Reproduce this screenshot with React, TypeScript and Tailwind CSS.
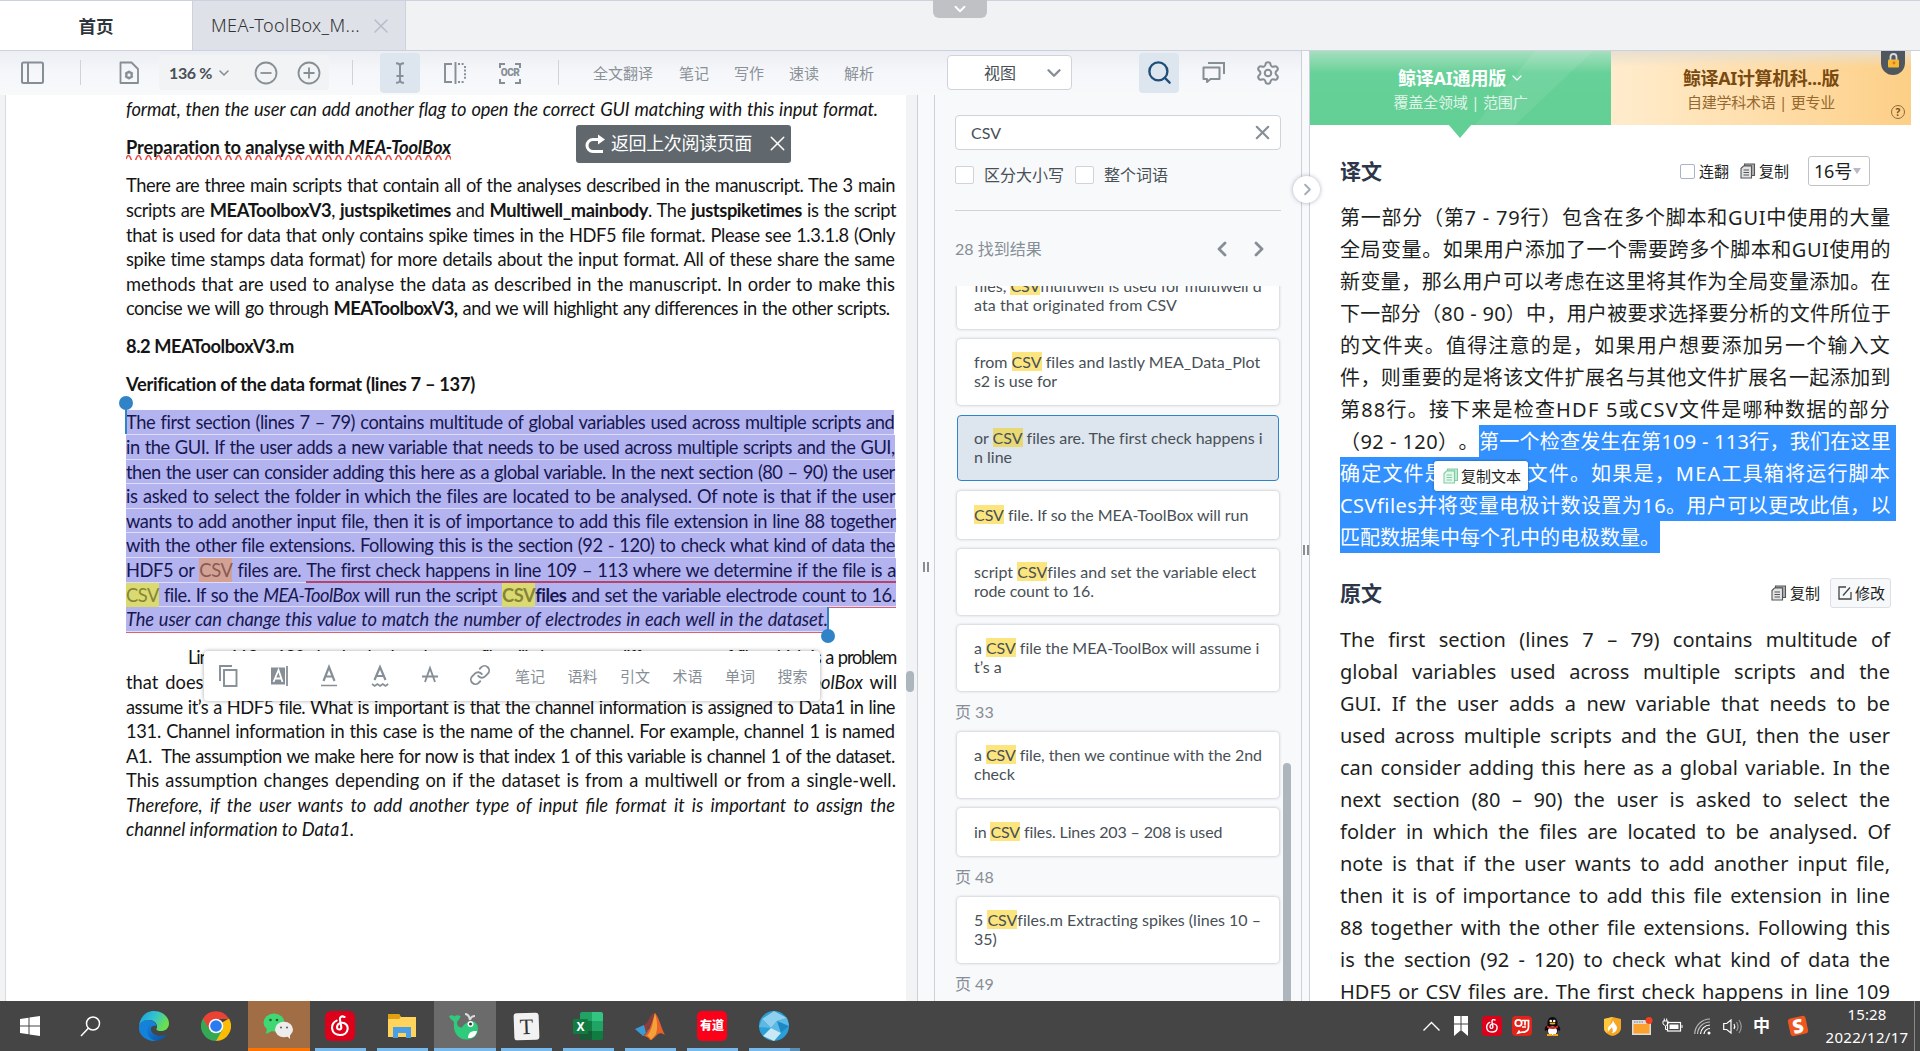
import React, { useLayoutEffect, useRef } from "react";
import { ChevronDown, ChevronLeft, ChevronRight, ChevronUp, X, Settings, Search, Link } from "lucide-react";

const UI = "font-['Noto_Sans','Noto_Sans_CJK_SC',sans-serif]";

type FitProps = { w: number; by?: "word" | "letter"; className?: string; children: React.ReactNode };

/** One line of text whose spacing is adjusted so that it fills exactly `w` pixels. */
function Fit({ w, by = "word", className = "", children }: FitProps) {
  const ref = useRef<HTMLSpanElement>(null);
  useLayoutEffect(() => {
    const el = ref.current;
    if (!el) return;
    el.style.letterSpacing = "";
    el.style.wordSpacing = "";
    const extra = w - el.getBoundingClientRect().width;
    const text = el.textContent || "";
    const count = Math.max(1, text.length);
    const spaces = text.split(/[ \u00a0]/).length - 1;
    if (by === "word" && spaces > 0) {
      const word = Math.max(0.9, extra / spaces);
      el.style.wordSpacing = word + "px";
      el.style.letterSpacing = (extra - word * spaces) / count + "px";
    } else el.style.letterSpacing = extra / count + "px";
  }, [w, by]);
  return (
    <span ref={ref} className={"inline-block whitespace-pre [text-spacing-trim:space-all] " + className}>
      {children}
    </span>
  );
}

function Line({ w = 769, by, sel, red, className = "", children }: { w?: number; by?: "word" | "letter"; sel?: boolean; red?: boolean; className?: string; children: React.ReactNode }) {
  return (
    <div className="h-[24.6px] leading-[24.6px]">
      <div className={"h-full w-fit " + (sel ? "border-b border-[#dedef8] bg-[#b3b3ef] text-[#17174f] " : "") + (red ? "shadow-[0_1px_0_#d9606f] " : "")}>
        <Fit w={w} by={by} className={className}>{children}</Fit>
      </div>
    </div>
  );
}

/* ---------- top ---------- */

function TabBar() {
  return (
    <div className="relative flex h-[51px] shrink-0 border-y border-[#cdd0dd] bg-[#f1f2f4]">
      <div className="flex w-[192px] items-center justify-center bg-white pt-px text-[17.5px] font-bold text-[#2f353c]">首页</div>
      <div className="flex w-[214px] items-center border-x border-[#cdd0dd] bg-[#dfe1e9] pl-[18px] text-[18px] font-light text-[#333]">
        <Fit w={149} by="letter">MEA-ToolBox_M...</Fit>
        <X className="ml-[9px] mt-px size-[24px] text-[#b9bcc8]" strokeWidth={1.5} />
      </div>
      <div className="absolute left-[933px] top-[-1px] flex h-[18px] w-[54px] items-center justify-center rounded-b-md bg-[#bfc1c4]">
        <ChevronDown className="size-[18px] text-white" strokeWidth={2.4} />
      </div>
    </div>
  );
}

function Divider({ className = "" }: { className?: string }) {
  return <div className={"h-[25px] w-px shrink-0 bg-[#ced4da] " + className} />;
}

function Toolbar() {
  return (
    <div className="flex h-[44px] w-full shrink-0 items-center bg-linear-to-b from-[#eceef3] via-[#f6f7fa] to-[#f8f9fb] pb-px text-[#868e96]">
      <svg className="ml-[20px] size-[24px]" viewBox="0 0 24 24" fill="none" stroke="currentColor" strokeWidth="2">
        <rect x="2" y="1.500" width="21" height="20.500" rx="1.5" /><path d="M8 2v20" />
      </svg>
      <Divider className="ml-[36px]" />
      <svg className="ml-[36px] size-[24px]" viewBox="0 0 24 24" fill="none" stroke="currentColor" strokeWidth="1.8">
        <path d="M3.500 1.500h11L21 8v14H3.500z" strokeLinejoin="round" /><circle cx="12" cy="14" r="3" /><path d="M12 9.500v9M8 11.700l8 4.600M8 16.300l8-4.600" strokeWidth="1.300" /><circle cx="12" cy="14" r="1.500" fill="#f6f7fa" stroke="none" />
      </svg>
      <div className="ml-[18px] flex h-[35px] w-[170px] items-center rounded bg-[#f1f3f5] pl-[10px]">
        <span className="w-[44px] font-['Lato'] text-[16px] font-bold text-[#485056]"><Fit w={43} by="letter">136 %</Fit></span>
        <ChevronDown className="ml-[3px] size-[16px]" strokeWidth={2.4} />
        <svg className="ml-[22px] size-[24px]" viewBox="0 0 24 24" fill="none" stroke="currentColor" strokeWidth="1.8"><circle cx="12" cy="12" r="10.5" /><path d="M6.500 12h11" /></svg>
        <svg className="ml-[19px] size-[24px]" viewBox="0 0 24 24" fill="none" stroke="currentColor" strokeWidth="1.8"><circle cx="12" cy="12" r="10.5" /><path d="M6.500 12h11M12 6.500v11" /></svg>
      </div>
      <Divider className="ml-[23px]" />
      <div className="ml-[27px] flex h-[40px] w-[40px] items-center justify-center rounded bg-[#dde5ee]">
        <svg className="size-[24px]" viewBox="0 0 24 24" fill="none" stroke="currentColor" strokeWidth="1.9"><path d="M8 2.200q4 0 4 2.800v14q0 2.800-4 2.800M16 2.200q-4 0-4 2.800M16 21.800q-4 0-4-2.800M8.500 15h7" /></svg>
      </div>
      <svg className="ml-[23px] size-[24px]" viewBox="0 0 24 24" fill="none" stroke="currentColor" strokeWidth="1.9"><path d="M9 3H2v18h7M12.500 1v22" /><path d="M15 3h7M22 5v14M15 21h7" strokeDasharray="2 1.6" /></svg>
      <div className="relative ml-[31px] flex size-[24px] items-center justify-center">
        <svg className="absolute inset-0 size-[24px]" viewBox="0 0 24 24" fill="none" stroke="currentColor" strokeWidth="2"><path d="M2 7V3h5M17 3h5v4M2 18v4h5M17 22h5v-4" /></svg>
        <span className="font-['Roboto'] text-[10px] font-black leading-none tracking-[-0.500px]">OCR</span>
      </div>
      <Divider className="ml-[36px]" />
      <div className={"flex gap-[26px] pl-[34px] pt-px text-[15px] text-[#8a9197] " + UI}>
        <Fit w={60} by="letter">全文翻译</Fit><span>笔记</span><span className="-ml-px">写作</span><span className="-ml-px">速读</span><span className="-ml-px">解析</span>
      </div>
      <div className="ml-[73px] flex h-[35px] w-[125px] items-center justify-between rounded border border-[#ced4da] bg-white pl-[36px] pr-[6px] text-[16px] text-[#485056]">
        <span>视图</span><ChevronDown className="size-[22px] text-[#868e96]" strokeWidth={2.6} />
      </div>
      <div className="ml-[67px] flex h-[40px] w-[40px] items-center justify-center rounded bg-[#dde5ee]">
        <Search className="size-[27px] text-[#1f4e79]" strokeWidth={2.1} />
      </div>
      <svg className="ml-[22px] size-[25px]" viewBox="0 0 25 25" fill="none" stroke="currentColor" strokeWidth="2"><path d="M7 3h16v11" /><path d="M2.500 7.500h16v11.500H9.500L6 22v-3H2.500z" strokeLinejoin="round" /></svg>
      <Settings className="ml-[29px] size-[26px]" strokeWidth={1.9} />
    </div>
  );
}

/* ---------- document ---------- */

function CSV({ tone = "y" }: { tone?: "y" | "o" }) {
  return <span className={"inline-block h-[24.5px] align-top leading-[24.6px] " + (tone === "y" ? "bg-[#dada70] text-[#85843a]" : "bg-[#d3a294] text-[#875a55]")}>CSV</span>;
}

function PopItem({ children }: { children: React.ReactNode }) {
  return <span className="w-[52.5px] shrink-0 text-[15px]">{children}</span>;
}

function SelectionPopup() {
  return (
    <div className="absolute left-[204px] top-[556px] flex h-[50px] w-[616px] items-center rounded bg-white pl-[12px] text-[#868e96] shadow-[0_0_4px_rgba(0,0,0,0.35)]">
      <div className="flex w-[299px] shrink-0 justify-between pr-[24px]">
        <svg className="size-[24px]" viewBox="0 0 24 24" fill="none" stroke="currentColor" strokeWidth="1.9"><path d="M4 17V2h12" /><rect x="8" y="6" width="12.500" height="16" /></svg>
        <svg className="size-[24px]" viewBox="0 0 24 24" fill="none" stroke="currentColor" strokeWidth="1.8"><path d="M4 3.500h14v17H4z" fill="currentColor" stroke="none" /><path d="M6.500 18l5-12L15.500 18M8.500 14.500h6" stroke="#fff" /><path d="M20 2v20" /></svg>
        <svg className="size-[24px]" viewBox="0 0 24 24" fill="none" stroke="currentColor" strokeWidth="2.200"><path d="M6.500 17L12 3l5.500 14M8.300 12.500h7.400" /><path d="M4 21.500h16" strokeWidth="1.500" /></svg>
        <svg className="size-[24px]" viewBox="0 0 24 24" fill="none" stroke="currentColor" strokeWidth="2.200"><path d="M6.500 16L12 3l5.500 13M8.300 12h7.400" /><path d="M4 20l2.700 2 2.700-2 2.700 2 2.700-2 2.700 2 2.700-2" strokeWidth="1.600" /></svg>
        <svg className="size-[24px]" viewBox="0 0 24 24" fill="none" stroke="currentColor" strokeWidth="1.9"><path d="M7 18L12 4l5 14M4 12.500h16" /></svg>
        <Link className="size-[22px]" strokeWidth={2} />
      </div>
      <div className="flex w-[305px] overflow-visible"><PopItem>笔记</PopItem><PopItem>语料</PopItem><PopItem>引文</PopItem><PopItem>术语</PopItem><PopItem>单词</PopItem><PopItem>搜索</PopItem></div>
    </div>
  );
}

function Document() {
  return (
    <div className="relative flex min-h-0 flex-1 overflow-hidden bg-[#f1f3f5]">
      <div className="ml-[5px] w-[901px] border-l border-[#d8dadd] bg-white pl-[120px] pt-[1.500px] font-['Lato','Noto_Sans_CJK_SC',sans-serif] text-[18.300px] text-[#151515]">
        <Line w={752} className="italic">format, then the user can add another flag to open the correct GUI matching with this input format.</Line>
        <div className="relative mt-[14.400px] w-fit">
          <Line w={325} by="letter" className="font-bold">Preparation to analyse with <i>MEA-ToolBox</i></Line>
          <svg className="absolute left-0 top-[19px] h-[6px] w-[325px]" viewBox="0 0 325 6" fill="none" stroke="#f04b45" strokeWidth="1.500">
            <path d={"M0 5" + Array.from({ length: 33 }, () => "q2.500-7 5 0t5 0").join("")} />
          </svg>
        </div>
        <div className="mt-[13.400px]">
          <Line>There are three main scripts that contain all of the analyses described in the manuscript. The 3 main</Line>
          <Line w={771}>scripts are <b>MEAToolboxV3</b>, <b>justspiketimes</b> and <b>Multiwell_mainbody</b>. The <b>justspiketimes</b> is the script</Line>
          <Line>that is used for data that only contains spike times in the HDF5 file format. Please see 1.3.1.8 (Only</Line>
          <Line>spike time stamps data format) for more details about the input format. All of these share the same</Line>
          <Line>methods that are used to analyse the data as described in the manuscript. In order to make this</Line>
          <Line w={763}>concise we will go through <b>MEAToolboxV3,</b> and we will highlight any differences in the other scripts.</Line>
        </div>
        <div className="mt-[13.400px] font-bold"><Line w={168} by="letter">8.2 MEAToolboxV3.m</Line></div>
        <div className="mt-[13.400px] font-bold"><Line w={349} by="letter">Verification of the data format (lines 7 – 137)</Line></div>
        <div className="relative mt-[13.400px]">
          <Line sel>The first section (lines 7 – 79) contains multitude of global variables used across multiple scripts and</Line>
          <Line sel>in the GUI. If the user adds a new variable that needs to be used across multiple scripts and the GUI,</Line>
          <Line sel>then the user can consider adding this here as a global variable. In the next section (80 – 90) the user</Line>
          <Line sel>is asked to select the folder in which the files are located to be analysed. Of note is that if the user</Line>
          <Line sel>wants to add another input file, then it is of importance to add this file extension in line 88 together</Line>
          <Line sel>with the other file extensions. Following this is the section (92 - 120) to check what kind of data the</Line>
          <Line sel>HDF5 or <CSV tone="o" /> files are. <span className="inline-block h-[24.600px] border-b-2 border-[#b5446d] align-top">The first check happens in line 109 – 113 where we determine if the file is a</span></Line>
          <Line sel red><CSV /> file. If so the <i>MEA-ToolBox</i> will run the script <b><CSV />files</b> and set the variable electrode count to 16.</Line>
          <Line sel red w={702} className="italic">The user can change this value to match the number of electrodes in each well in the dataset.</Line>
          <div className="absolute left-[-1px] top-[-7px] h-[31px] w-[2px] bg-[#3183c8]" />
          <div className="absolute left-[-7px] top-[-14px] size-[14px] rounded-full bg-[#3183c8]" />
          <div className="absolute left-[701px] top-[197px] h-[26px] w-[2px] bg-[#3183c8]" />
          <div className="absolute left-[695px] top-[219px] size-[14px] rounded-full bg-[#3183c8]" />
        </div>
        <div className="mt-[13.600px]">
          <div className="pl-[62px]"><Line w={707}>Lines 113 – 120 check whether the user file will also open a different type of file, which is a problem</Line></div>
          <Line w={771}>that does not need to be handled here. If the file is not a CSV file then the <i>MEA-ToolBox</i> will</Line>
          <Line>assume it’s a HDF5 file. What is important is that the channel information is assigned to Data1 in line</Line>
          <Line>131. Channel information in this case is the name of the channel. For example, channel 1 is named</Line>
          <Line>A1.  The assumption we make here for now is that index 1 of this variable is channel 1 of the dataset.</Line>
          <Line w={770}>This assumption changes depending on if the dataset is from a multiwell or from a single-well.</Line>
          <Line className="italic">Therefore, if the user wants to add another type of input file format it is important to assign the</Line>
          <Line w={228} by="letter" className="italic">channel information to Data1.</Line>
        </div>
      </div>
      <div className="w-[11px] bg-[#f1f3f5] pt-[576px]"><div className="h-[21px] w-[8px] rounded-full bg-[#adb5bd]" /></div>
      <div className="flex w-[18px] items-center justify-center gap-[2px] border-x border-[#ccd0d8] bg-[#f8f9fb]">
        <div className="mt-[38px] h-[10px] w-[2px] bg-[#8a8d92]" /><div className="mt-[38px] h-[10px] w-[2px] bg-[#8a8d92]" />
      </div>
      <div className={"absolute left-[576px] top-[30px] flex h-[38px] w-[215px] items-center rounded-[3px] bg-[#60686e] pl-[9px] pb-px text-[18px] text-white " + UI}>
        <svg className="mt-px size-[21px] shrink-0" viewBox="0 0 21 21" fill="none" stroke="#fff" strokeWidth="3"><path d="M18 17.500H8a6 6 0 0 1 0-12h8" /><path d="M13 0.500l7 5-7 5z" fill="#fff" stroke="none" /></svg>
        <Fit w={141} by="letter" className="ml-[5px]">返回上次阅读页面</Fit>
        <X className="ml-[13px] size-[25px] shrink-0" strokeWidth={1.400} />
      </div>
      <SelectionPopup />
    </div>
  );
}

/* ---------- search panel ---------- */

function Result({ lines, active }: { lines: React.ReactNode[]; active?: boolean }) {
  return (
    <div className={"mb-[10px] flex shrink-0 flex-col justify-center rounded pb-px leading-[19px] " + (lines.length > 1 ? "h-[66px] " : "h-[48px] ") + (active ? "border border-[#3183c8] bg-[#dde5ee] px-[16px]" : "bg-white px-[17px] shadow-[0_0_3px_rgba(100,110,130,0.500)]")}>
      {lines.map((l, i) => <div key={i} className="whitespace-pre">{l}</div>)}
    </div>
  );
}
const M = ({ active }: { active?: boolean }) => <span className={"inline-block h-[19px] align-top " + (active ? "bg-[#e9d974]" : "bg-[#fce57e]")}>CSV</span>;
const F = (w: number, n: React.ReactNode) => <Fit w={w} by="letter">{n}</Fit>;
const Page = ({ n }: { n: number }) => <div className="-ml-[2px] mb-[10px] mt-px h-[20px] shrink-0 leading-[20px] text-[#868e96]">页 {n}</div>;

function SearchPanel() {
  return (
    <div className="flex w-[366px] shrink-0 flex-col bg-[#f8f9fb] font-['Lato','Noto_Sans_CJK_SC',sans-serif] text-[16px] text-[#485056]">
      <div className="ml-[20px] mt-[20px] flex h-[35px] w-[326px] items-center justify-between rounded border border-[#ced4da] bg-white pl-[15px] pr-[6px]">
        CSV<X className="size-[23px] text-[#868e96]" strokeWidth={2.200} />
      </div>
      <div className="ml-[20px] mt-[16px] flex h-[18px] items-center">
        <div className="h-[18px] w-[19px] rounded-[2px] border border-[#ced4da] bg-white" /><span className="ml-[10px] w-[91px]">区分大小写</span>
        <div className="h-[18px] w-[19px] rounded-[2px] border border-[#ced4da] bg-white" /><span className="ml-[10px]">整个词语</span>
      </div>
      <div className="ml-[20px] mt-[26px] h-px w-[326px] shrink-0 bg-[#ced4da]" />
      <div className="ml-[20px] mt-[26px] flex h-[24px] items-center text-[#868e96]">
        <span className="w-[255px]">28 找到结果</span><ChevronLeft className="size-[24px]" strokeWidth={2.800} /><ChevronRight className="ml-[13px] size-[24px]" strokeWidth={2.800} />
      </div>
      <div className="relative mt-[25px] flex min-h-0 flex-1 flex-col overflow-hidden pl-[22px] pr-[22px]">
        <div className="-mt-[23.500px] flex flex-col">
          <Result lines={[F(288, <>files, <M />multiwell is used for multiwell d</>), F(203, "ata that originated from CSV")]} />
          <Result lines={[F(286, <>from <M /> files and lastly MEA_Data_Plot</>), F(83, "s2 is use for")]} />
          <Result active lines={[F(288, <>or <M active /> files are. The first check happens i</>), "n line"]} />
          <Result lines={[F(274, <><M /> file. If so the MEA-ToolBox will run</>)]} />
          <Result lines={[F(282, <>script <M />files and set the variable elect</>), F(120, "rode count to 16.")]} />
          <Result lines={[F(285, <>a <M /> file the MEA-ToolBox will assume i</>), "t’s a"]} />
          <Page n={33} />
          <Result lines={[F(288, <>a <M /> file, then we continue with the 2nd</>), "check"]} />
          <Result lines={[F(248, <>in <M /> files. Lines 203 – 208 is used</>)]} />
          <Page n={48} />
          <Result lines={[F(287, <>5 <M />files.m Extracting spikes (lines 10 –</>), "35)"]} />
          <Page n={49} />
        </div>
        <div className="absolute left-[348px] top-[477px] h-[250px] w-[8px] rounded-t-full bg-[#adb5bd]" />
      </div>
    </div>
  );
}

/* ---------- translation panel ---------- */

function CopyIcon({ color = "#555", fill = "#e3e4e6" }: { color?: string; fill?: string }) {
  return (
    <svg className="size-[16px] shrink-0" viewBox="0 0 16 16" fill="none" stroke={color} strokeWidth="1.100"><path d="M4.500 1H14.500V12.500h-3V3h-7z" fill={color} fillOpacity=".45" /><path d="M1 5.500L3.500 3h8v12H1z" fill={fill} /><path d="M3.500 7h5.500M3.500 9.500h5.500M3.500 12h5.500" /></svg>
  );
}

const zh = [
  "第一部分（第7 - 79行）包含在多个脚本和GUI中使用的大量",
  "全局变量。如果用户添加了一个需要跨多个脚本和GUI使用的",
  "新变量，那么用户可以考虑在这里将其作为全局变量添加。在",
  "下一部分（80 - 90）中，用户被要求选择要分析的文件所位于",
  "的文件夹。值得注意的是，如果用户想要添加另一个输入文",
  "件，则重要的是将该文件扩展名与其他文件扩展名一起添加到",
  "第88行。接下来是检查HDF 5或CSV文件是哪种数据的部分",
];
const en = [
  "The first section (lines 7 – 79) contains multitude of",
  "global variables used across multiple scripts and the",
  "GUI. If the user adds a new variable that needs to be",
  "used across multiple scripts and the GUI, then the user",
  "can consider adding this here as a global variable. In the",
  "next section (80 – 90) the user is asked to select the",
  "folder in which the files are located to be analysed. Of",
  "note is that if the user wants to add another input file,",
  "then it is of importance to add this file extension in line",
  "88 together with the other file extensions. Following this",
  "is the section (92 - 120) to check what kind of data the",
  "HDF5 or CSV files are. The first check happens in line 109",
];

function TranslatePanel() {
  return (
    <div className={"relative flex min-w-0 flex-1 flex-col overflow-hidden bg-white text-[#1d1f22] " + UI}>
      <div className="flex h-[74px] w-[601px] shrink-0 text-center">
        <div className="relative flex w-[301px] flex-col items-center bg-linear-to-b from-[#a4dfbf] via-[#66d198] via-30% to-[#62cf94] pt-[14px] text-white">
          <svg className="absolute inset-0 h-full w-full" viewBox="0 0 301 74"><path d="M225 0h58L205 74h-40z" fill="#fff" opacity=".08" /></svg>
          <div className="flex h-[26px] items-center gap-[3px] text-[18px] font-bold"><Fit w={108} by="letter">鲸译AI通用版</Fit><ChevronDown className="-mr-[2px] size-[16px]" strokeWidth={1.800} /></div>
          <div className="h-[24px] text-[15px] leading-[23px] opacity-80"><Fit w={134} by="letter">覆盖全领域 | 范围广</Fit></div>
          <div className="absolute left-[138px] top-[73px] size-0 border-x-[12px] border-t-[14px] border-x-transparent border-t-[#62cf94]" />
        </div>
        <div className="relative flex flex-1 flex-col items-center overflow-hidden bg-linear-to-r from-[#ffeccd] to-[#fdcf86] pt-[14px] text-[#7a4a10]">
          <div className="absolute inset-x-0 top-0 h-[16px] bg-linear-to-b from-[#e8dfd0] to-transparent" />
          <div className="relative h-[26px] text-[18px] font-bold leading-[26px]"><Fit w={156} by="letter">鲸译AI计算机科...版</Fit></div>
          <div className="h-[24px] text-[15px] leading-[23px] text-[#96682f]"><Fit w={148} by="letter">自建学科术语 | 更专业</Fit></div>
          <div className="absolute right-[6px] top-0 flex h-[24px] w-[24px] justify-center rounded-b-full bg-[#50565e] pt-[2px]">
            <svg className="h-[15px] w-[13px]" viewBox="0 0 13 15"><path d="M3.500 7V4a3 3 0 0 1 6 0v3" fill="none" stroke="#d8dde0" strokeWidth="1.800" /><rect x="1" y="6.500" width="11" height="8" rx="1" fill="#f5b82e" /><circle cx="7" cy="10" r="1.400" fill="#e0742a" /></svg>
          </div>
          <div className="absolute bottom-[6px] right-[6px] flex size-[14px] items-center justify-center rounded-full border-[1.500px] border-[#8a6a45] text-[10px] font-bold leading-none">?</div>
        </div>
      </div>
      <div className="mt-[30px] flex h-[32px] w-[580px] shrink-0 items-center pl-[30px] text-[15px]">
        <span className="w-[340px] pt-[2px] text-[21px] font-bold text-[#2c3648]">译文</span>
        <div className="size-[15px] rounded-[2px] border border-[#a9b2c6]" /><span className="ml-[4px] w-[41px]">连翻</span>
        <CopyIcon /><span className="ml-[3px] w-[49px]">复制</span>
        <div className="flex h-[30px] w-[62px] items-center gap-[1px] rounded-[3px] border border-[#c0c2c8] pl-[5px] text-[18px]"><Fit w={38} by="letter" className="pt-px">16号</Fit><div className="size-0 border-x-[4px] border-t-[6px] border-x-transparent border-t-[#b5bbc9]" /></div>
      </div>
      <div className="relative mt-[14px] shrink-0 pl-[30px] text-[20px] leading-[34px]">
        {zh.map((t) => <div key={t} className="h-[32px]"><Fit w={551} by="letter">{t}</Fit></div>)}
        <div className="flex h-[32px]">
          <Fit w={139} by="letter">（92 - 120）。</Fit>
          <div className="h-[32px] w-[417px] bg-[#3390ff] text-white"><Fit w={412} by="letter">第一个检查发生在第109 - 113行，我们在这里</Fit></div>
        </div>
        <div className="h-[64px] w-[556px] bg-[#3390ff] text-white">
          <div className="h-[32px]"><Fit w={551} by="letter">确定文件是否为CSV文件。如果是，MEA工具箱将运行脚本</Fit></div>
          <div className="h-[32px]"><Fit w={551} by="letter">CSVfiles并将变量电极计数设置为16。用户可以更改此值，以</Fit></div>
        </div>
        <div className="h-[32px] w-[320px] bg-[#3390ff] text-white"><Fit w={320} by="letter">匹配数据集中每个孔中的电极数量。</Fit></div>
        <div className="absolute left-[124px] top-[260px] flex h-[30px] w-[94px] items-center gap-[2px] rounded-[3px] bg-white pl-[9px] text-[15px] shadow-[0_0_3px_rgba(0,0,0,0.400)]"><CopyIcon color="#7ccfa4" fill="#e6f7ee" /><span>复制文本</span></div>
      </div>
      <div className="mt-[25px] flex h-[30px] shrink-0 items-center pl-[30px] text-[15px]">
        <span className="w-[431px] pt-[2px] text-[21px] font-bold text-[#2c3648]">原文</span>
        <CopyIcon /><span className="ml-[3px] w-[40px]">复制</span>
        <div className="flex h-[30px] w-[61px] items-center gap-[3px] rounded-[3px] border border-[#dcdfe6] bg-[#f7f8fa] pl-[7px]">
          <svg className="size-[14px]" viewBox="0 0 14 14" fill="none" stroke="#444" strokeWidth="1.300"><path d="M8 1H1v12h12V6" /><path d="M5 9.500L12 1.500" /></svg>修改
        </div>
      </div>
      <div className="mt-[16px] pl-[30px] text-[20px] leading-[32px]">
        {en.map((t) => <div key={t} className="h-[32px]"><Fit w={550}>{t}</Fit></div>)}
      </div>
    </div>
  );
}

/* ---------- taskbar ---------- */

function Slot({ children, bg = "", bar = "" }: { children: React.ReactNode; bg?: string; bar?: string }) {
  return (
    <div className={"relative flex h-full w-[62px] items-center justify-center pr-[2px] " + bg}>
      {children}
      {bar && <div className={"absolute bottom-0 h-[3px] " + bar} />}
    </div>
  );
}
const Netease = ({ s }: { s: string }) => (
  <svg className={s} viewBox="0 0 30 30"><rect width="30" height="30" rx="6" fill="#dd001b" /><path d="M19.500 6c-3-1.500-5 0-4.500 3l1.300 7c.5 3-3.800 3.500-4.200.8-.4-3.300 2.200-5 5-5 3.800 0 6 3 5.500 6.300-.8 8-14.500 8-15.500-.5-.4-4 1.500-6.500 4.500-8" fill="none" stroke="#fff" strokeWidth="2.100" strokeLinecap="round" /></svg>
);
const BAR = "left-[5px] w-[51px] bg-[#76b9ed]";

function Taskbar() {
  return (
    <div className={"flex h-[50px] shrink-0 bg-[#454545] text-white " + UI}>
      <Slot><svg className="size-[20px]" viewBox="0 0 20 20" fill="#fff"><path d="M0 3l8.500-1.200v7.700H0zM9.500 1.600L20 0v9.500H9.500zM0 10.500h8.500v7.700L0 17zM9.500 10.500H20V20L9.500 18.400z" /></svg></Slot>
      <Slot><svg className="ml-[-4px] size-[21px]" viewBox="0 0 21 21" fill="none" stroke="#fff" strokeWidth="1.500"><circle cx="13" cy="7.500" r="6.500" /><path d="M8.300 12.200L1 20" /></svg></Slot>
      <Slot><svg className="size-[30px]" viewBox="0 0 30 30">
        <defs><linearGradient id="e1" x1="0" y1="0" x2="1" y2=".4"><stop stopColor="#1a9be0" /><stop offset=".55" stopColor="#34c3d0" /><stop offset="1" stopColor="#6be04a" /></linearGradient><linearGradient id="e2" x1="0" y1="0" x2="1" y2="1"><stop stopColor="#1383dc" /><stop offset="1" stopColor="#0b4fa0" /></linearGradient></defs>
        <path d="M0 15C1 6 7 0 15 0c9 0 15 6.500 15 12.500 0 5-4 7.500-8 7.500-3 0-5-1-4.500-2.200C19.500 14 16 9 10 9 5 9 1 12 0 15z" fill="url(#e1)" />
        <path d="M0 15C2 10 6 8.500 10 9c4 .3 7 3 7.500 6-4-1-6 1-6 4 0 5 6 7.500 13 5.500C21 29 16 30.500 12 29.700 4 28-1 22 0 15z" fill="#1482d8" />
        <path d="M11 12.500C4.500 21 11 30 18 29.600c4-.3 8-3 10-6.100-7 3.500-15 .5-16-4.500-.3-2.500 0-4.500-1-6.500z" fill="url(#e2)" />
      </svg></Slot>
      <Slot><svg className="size-[30px]" viewBox="0 0 30 30"><path d="M15 15L28 7.500A15 15 0 0 1 15 30z" fill="#fbbc05" /><path d="M2 7.500a15 15 0 0 0 13 22.500l6.500-11.200L15 15z" fill="#34a853" /><path d="M15 8h13a15 15 0 0 0-26-.5l6.500 11.200z" fill="#ea4335" /><circle cx="15" cy="15" r="7.300" fill="#fff" /><circle cx="15" cy="15" r="5.800" fill="#2a7bf0" /></svg></Slot>
      <Slot bg="bg-[#a06d44]" bar="left-0 w-full bg-[#ff7300]"><svg className="h-[26px] w-[30px]" viewBox="0 0 30 26"><ellipse cx="11" cy="9.500" rx="10.500" ry="9" fill="#3fd873" /><path d="M4 15l-1 6 6-3z" fill="#3fd873" /><circle cx="7.500" cy="7" r="1.300" fill="#255c38" /><circle cx="14" cy="7" r="1.300" fill="#255c38" /><ellipse cx="21" cy="16.500" rx="9" ry="7.700" fill="#ededed" /><path d="M23 22l4 4 0-5z" fill="#ededed" /><circle cx="18" cy="14.500" r="1.100" fill="#666" /><circle cx="24" cy="14.500" r="1.100" fill="#666" /></svg></Slot>
      <Slot bar={BAR}><Netease s="size-[30px]" /></Slot>
      <Slot bar={BAR}><svg className="h-[24px] w-[28px]" viewBox="0 0 28 24"><path d="M0 0h11l2 3h15v20H0z" fill="#ffd35c" /><path d="M0 0h11l2 3-2 2H0z" fill="#e0a010" /><path d="M5 24V13h18v11h-5v-5h-8v5z" fill="#4a9ee8" /></svg></Slot>
      <Slot bg="bg-[#6b6b6b]" bar="left-0 w-full bg-[#76b9ed]"><svg className="size-[30px]" viewBox="0 0 30 30"><path d="M5 12C5 9 1 9 0 5c2-1 4-1 5.500.5C7 4 9 4 11.500 5 11 9 8 9 8 12c0 3 2 4.500 5 4.500 2-4 7-6.500 11-6 5 1 6 7 4 12-2 4-6 6-11 6C8 28 4 20 5 12z" fill="#2ecb7d" /><path d="M19 27c0-5 3-7.500 9-7-1 5-4 7.500-9 7z" fill="#fff" /><path d="M16 3q4 0 5 6M26 5q-4 0-5 4" stroke="#ddd" strokeWidth="2" fill="none" /><circle cx="21.500" cy="13" r="3" fill="#fff" /><circle cx="21.500" cy="13" r="1.500" fill="#333" /></svg></Slot>
      <Slot bar={BAR}><div className="flex h-[27px] w-[25px] -rotate-2 items-center justify-center rounded-[3px] bg-[#f2f2f2] font-['Liberation_Serif'] text-[22px] leading-none text-[#333]">T</div></Slot>
      <Slot bar={BAR}><div className="relative h-[28px] w-[30px]"><div className="absolute right-0 grid h-full w-[23px] grid-cols-2 overflow-hidden rounded-[2px]"><i className="bg-[#21a366]" /><i className="bg-[#33c481]" /><i className="bg-[#107c41]" /><i className="bg-[#21a366]" /><i className="bg-[#185c37]" /><i className="bg-[#107c41]" /></div><div className="absolute left-0 top-[7px] flex size-[15px] items-center justify-center rounded-[1px] bg-[#107c41] text-[12px] font-bold leading-none">X</div></div></Slot>
      <Slot bar={BAR}><svg className="h-[27px] w-[30px]" viewBox="0 0 30 27"><path d="M0 16l9-4 5 5-6 6z" fill="#3b9bd6" /><path d="M9 12c5-2 6-12 11-12-3 8-5 15-9 20z" fill="#8a3d3a" /><path d="M20 0c4 4 6 15 10 22-4-3-7-2-9 1-2 2-4 4-6 4-2-3-4-4-7-4C15 20 17 8 20 0z" fill="#e8622a" /><path d="M20 0c2 7 3 14 1 21l-5 6c-1-3-3-4-4-4 6-7 6-16 8-23z" fill="#f5a13a" /></svg></Slot>
      <Slot bar={BAR}><div className="flex size-[30px] items-center justify-center rounded-[5px] bg-[#fc0019] text-[12px] font-black">有道</div></Slot>
      <Slot bar="left-[5px] w-[41px] bg-[#76b9ed]"><svg className="size-[30px]" viewBox="0 0 30 30"><circle cx="15" cy="15" r="15" fill="#2b9fd8" /><path d="M15 0L3 8l9 9 6-7zM15 0l3 10 10-3z" fill="#8ed0ee" /><path d="M3 8l-3 8 12 1zM28 7L18 10l-6 7 10 5 8-7z" fill="#5bb9e4" /><path d="M12 17l-8 8 11 5 7-8z" fill="#c8e8f6" /><path d="M18 10l4 12 8-7z" fill="#1c88c4" /></svg><div className="absolute bottom-0 left-[46px] h-[3px] w-[10px] bg-[#5a8cb4]" /></Slot>

      <div className="ml-auto flex items-center">
        <div className="flex w-[30px] justify-center"><svg className="h-[10px] w-[17px]" viewBox="0 0 17 10" fill="none" stroke="#fff" strokeWidth="1.400"><path d="M.5 9.500l8-8 8 8" /></svg></div>
        <div className="flex w-[30px] justify-center"><svg className="h-[20px] w-[14px]" viewBox="0 0 14 20"><path d="M0 0h14v20l-7-6-7 6z" fill="#fff" /><path d="M7 0v14M0 8h14" stroke="#454545" /></svg></div>
        <div className="flex w-[31px] justify-center"><Netease s="size-[20px]" /></div>
        <div className="flex w-[30px] justify-center"><svg className="size-[20px]" viewBox="0 0 20 20"><rect width="20" height="20" rx="4" fill="#e2231a" /><circle cx="6.500" cy="7" r="3.200" fill="none" stroke="#fff" strokeWidth="1.800" /><path d="M10 4.500h6.500v7c0 3-3 5-6 4.500L6 17l1.500-2.500M13 5v4.500M10 11h4" fill="none" stroke="#fff" strokeWidth="1.700" /></svg></div>
        <div className="flex w-[30px] justify-center"><svg className="h-[19px] w-[17px]" viewBox="0 0 17 19"><path d="M1 14c-1-3 1-5 2.500-6C3 3 5 0 8.500 0s5.500 3 5 8c1.500 1 3.500 3 2.500 6l-2-1-2 5H5l-2-5z" fill="#0c0c0c" /><ellipse cx="8.500" cy="14" rx="4.500" ry="4.500" fill="#fff" /><circle cx="6.800" cy="4" r="1.300" fill="#fff" /><circle cx="10.200" cy="4" r="1.300" fill="#fff" /><ellipse cx="8.500" cy="6.500" rx="3" ry="1" fill="#f5a70c" /><path d="M3 8.500q5.500 3 11 0v2q-5.500 3-11 0z" fill="#e3202a" /><path d="M3 18h5M9 18h5" stroke="#f5a70c" strokeWidth="1.800" /></svg></div>
        <div className="ml-[30px] flex w-[30px] justify-center"><svg className="h-[19px] w-[17px]" viewBox="0 0 17 19"><path d="M8.500 0L17 2v9c0 4-4 7-8.500 8C4 18 0 15 0 11V2z" fill="#f5a623" /><path d="M8.500 0L0 2v9c0 2 1 4 3 5z" fill="#ffc83d" /><path d="M9 3c1 4 4 5 4 8 0 3-3 5-5 5 2-3 0-4 0-6-1 2-3 2-3 5-4-6 4-7 4-12z" fill="#fff" /></svg></div>
        <div className="flex w-[30px] justify-center"><svg className="h-[19px] w-[21px]" viewBox="0 0 21 19"><rect x="0" y="3" width="19" height="15" fill="#ddd" /><rect x="1.500" y="7" width="16" height="9.500" fill="#fba12f" /><path d="M2 5h10" stroke="#777" strokeDasharray="1.500 1" /><circle cx="17" cy="3.500" r="3.500" fill="#f1421d" /></svg></div>
        <div className="flex w-[30px] justify-center"><svg className="h-[16px] w-[21px]" viewBox="0 0 21 16" fill="none" stroke="#fff"><rect x="5.500" y="4.500" width="13" height="8.500" strokeWidth="1.200" /><rect x="7.500" y="6.500" width="9" height="4.500" fill="#fff" stroke="none" /><path d="M20 7v3M1 3h5v3l-2.500 2L1 6zM2.300 0.500V3M4.700 0.500V3M3.500 8v3.500h2" /></svg></div>
        <div className="flex w-[31px] justify-center"><svg className="size-[17px]" viewBox="0 0 17 17" fill="none" stroke="#fff" strokeWidth="1.200"><circle cx="15" cy="15" r="1.500" fill="#fff" stroke="none" /><path d="M10 16a6 6 0 0 1 6-5.500M6.500 16A9.500 9.500 0 0 1 16 7" /><path d="M3.500 16A12.500 12.500 0 0 1 16 4M.7 16A15.500 15.500 0 0 1 16 1" stroke="#bbb" /></svg></div>
        <div className="flex w-[29px] justify-center"><svg className="h-[17px] w-[20px]" viewBox="0 0 20 17" fill="none" stroke="#fff" strokeWidth="1.200"><path d="M.7 5.500h3L8 2v13l-4.300-3.500h-3z" /><path d="M11 6q1.500 2.500 0 5" /><path d="M13.500 4q3 4.500 0 9M16 2q4.500 6.500 0 13" stroke="#999" /></svg></div>
        <div className="w-[29px] pb-[2px] text-center text-[17px] font-bold leading-none">中</div>
        <div className="ml-[6px] flex w-[31px] justify-center"><div className="flex size-[18px] -rotate-12 items-center justify-center rounded-[3px] bg-[#f0561f] text-[19px] font-black leading-none">S</div></div>
        <div className="flex w-[101px] flex-col items-center pl-[7px] text-[15px] leading-[23px]"><Fit w={39} by="letter">15:28</Fit><Fit w={83} by="letter">2022/12/17</Fit></div>
        <div className="mr-[5px] h-[50px] w-px bg-[#8a8a8a]" />
      </div>
    </div>
  );
}

export default function App() {
  return (
    <div className={"flex h-[1051px] w-[1920px] flex-col overflow-hidden bg-white " + UI}>
      <TabBar />
      <div className="flex min-h-0 flex-1">
        <div className="flex w-[1301px] shrink-0 flex-col overflow-hidden">
          <Toolbar />
          <div className="flex min-h-0 flex-1">
            <Document />
            <SearchPanel />
          </div>
        </div>
        <div className="relative z-10 flex w-[9px] shrink-0 justify-center gap-[2px] border-x border-[#ccd0d8] bg-[#f8f9fb] pt-[494px]">
          <div className="h-[10px] w-[2px] bg-[#8a8d92]" /><div className="h-[10px] w-[2px] bg-[#8a8d92]" />
          <div className="absolute left-[-9px] top-[125px] flex size-[27px] items-center justify-center rounded-full bg-white shadow-[0_0_4px_rgba(90,100,130,0.500)]">
            <ChevronRight className="ml-px size-[19px] text-[#a5adbd]" strokeWidth={2.400} />
          </div>
        </div>
        <TranslatePanel />
      </div>
      <Taskbar />
    </div>
  );
}
